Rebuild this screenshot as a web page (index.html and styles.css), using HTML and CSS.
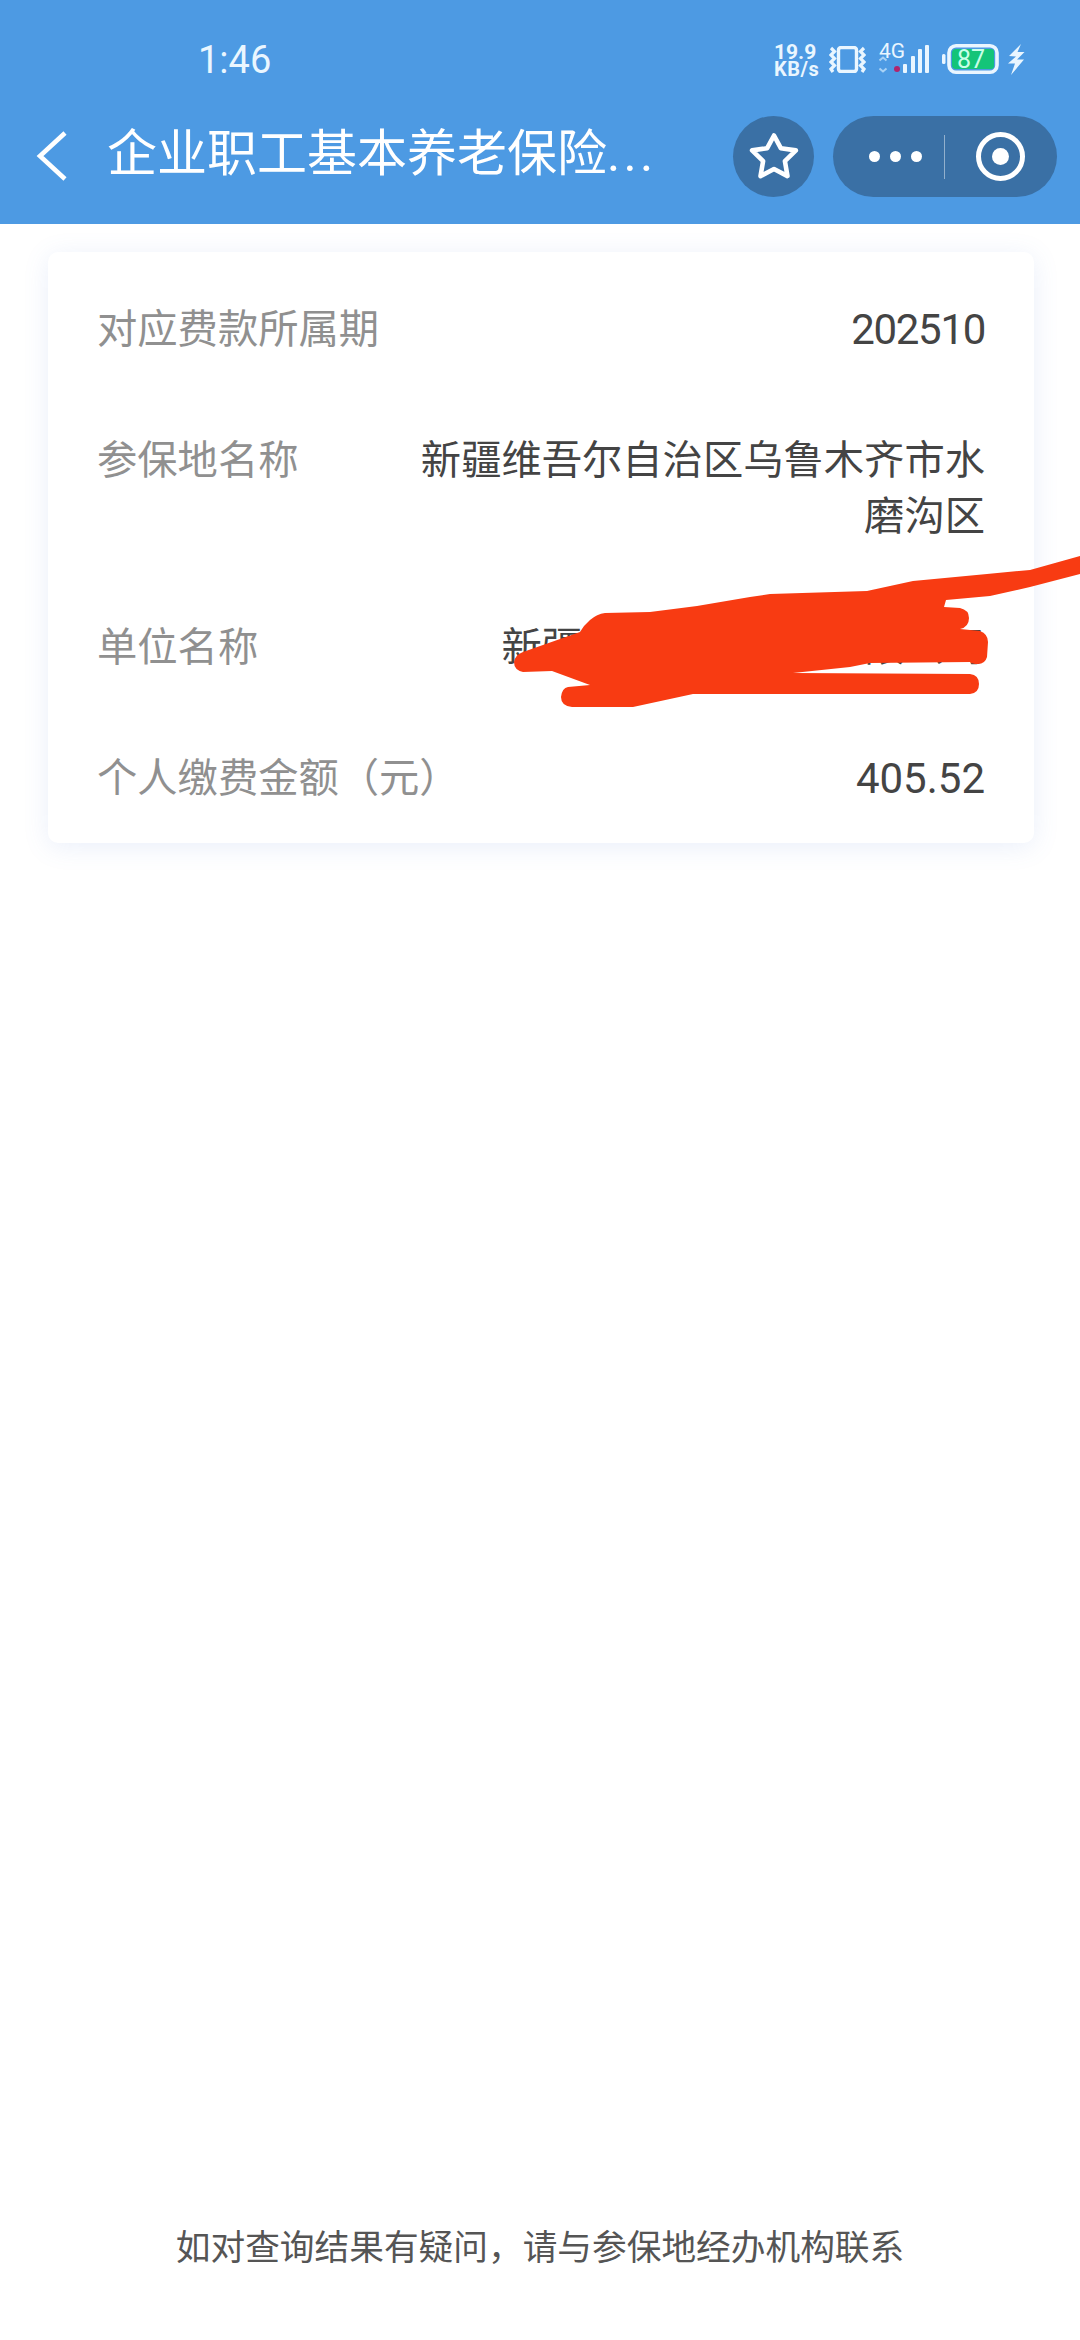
FILE: index.html
```html
<!DOCTYPE html>
<html lang="zh-CN">
<head>
<meta charset="utf-8">
<title>企业职工基本养老保险</title>
<link rel="stylesheet" href="styles.css">
</head>
<body>
<div class="page">
  <header class="header">
    <div class="status">
      <span class="time">1:46</span>
      <div class="status-icons">
        <div class="speed"><span class="speed-num">19.9</span><span class="speed-unit">KB/s</span></div>
        <svg class="ic-vibrate" viewBox="0 0 37 27" width="37" height="27" fill="none" stroke="#eaf6ff" stroke-width="3.2">
          <rect x="9.500" y="1.500" width="18" height="24" rx="2.500" stroke-width="3.400"/>
          <path d="M2 2l3.500 3.500L2 9l3.500 3.500L2 16l3.500 3.500L2 23l2 3"/>
          <path d="M35 2l-3.500 3.500L35 9l-3.500 3.500L35 16l-3.500 3.500L35 23l-2 3"/>
        </svg>
        <svg class="ic-signal" viewBox="0 0 52 37" width="52" height="37">
          <text x="1" y="21" class="net">4G</text>
          <path d="M1.500 24.500L5 21.500l3.500 3M1.500 32.500l3.500 3 3.500-3" transform="translate(0 -1)" fill="none" stroke="#a9d2f5" stroke-width="2"/>
          <circle cx="19" cy="32" r="3" fill="#b0246c"/>
          <rect x="25" y="27" width="4" height="9" rx="1" fill="#eaf6ff"/>
          <rect x="33" y="19" width="4" height="17" rx="1" fill="#eaf6ff"/>
          <rect x="40" y="12" width="4" height="24" rx="1" fill="#eaf6ff"/>
          <rect x="47" y="8" width="4" height="28" rx="1" fill="#eaf6ff"/>
        </svg>
        <svg class="ic-battery" viewBox="0 0 57 30" width="57" height="30">
          <rect x="7" y="1.800" width="48" height="26.400" rx="7" fill="none" stroke="#eaf6ff" stroke-width="3.600"/>
          <path d="M14 5h35a3 3 0 0 1 3 3v14a3 3 0 0 1-3 3H14a4 4 0 0 1-4-4V9a4 4 0 0 1 4-4z" fill="#14c478"/>
          <rect x="0" y="10" width="3.500" height="10" rx="1.500" fill="#eaf6ff"/>
          <text x="15" y="24" class="batt">87</text>
        </svg>
        <svg class="ic-bolt" viewBox="0 0 18 31" width="18" height="31" fill="#eaf6ff">
          <path d="M14 0L2 12 9 12.500 1 19.500 8 19.500 4 31 17 15.500 10 15.500 17.500 8 10.500 8z"/>
        </svg>
      </div>
    </div>
    <nav class="nav">
      <svg class="back" viewBox="0 0 32 50" width="32" height="50" fill="none" stroke="#fff" stroke-width="4.600">
        <path d="M29 2L4 25l25 23"/>
      </svg>
      <h1 class="title">企业职工基本养老保险<span class="ell">...</span></h1>
      <div class="fav">
        <svg viewBox="0 0 50 50" width="50" height="50" fill="none" stroke="#fff" stroke-width="4.600" stroke-linejoin="round">
          <path d="M25 3.500L31.800 16.200 46.900 18.400 35.900 29.100 38.500 44.100 25 37 11.500 44.100 14.100 29.100 3.100 18.400 18.200 16.200z"/>
        </svg>
      </div>
      <div class="capsule">
        <div class="dots"><i></i><i></i><i></i></div>
        <div class="sep"></div>
        <div class="target"><i></i></div>
      </div>
    </nav>
  </header>

  <main class="main">
    <section class="card">
      <div class="row">
        <span class="label">对应费款所属期</span>
        <span class="value num num-tight">202510</span>
      </div>
      <div class="row">
        <span class="label">参保地名称</span>
        <span class="value">新疆维吾尔自治区乌鲁木齐市水磨沟区</span>
      </div>
      <div class="row">
        <span class="label">单位名称</span>
        <span class="value">新疆某某某某某某有限公司</span>
      </div>
      <div class="row">
        <span class="label">个人缴费金额（元）</span>
        <span class="value num">405.52</span>
      </div>
    </section>
  </main>

  <footer class="footer">如对查询结果有疑问，请与参保地经办机构联系</footer>

  <svg class="scribble" viewBox="0 0 1080 2340" width="1080" height="2340">
    <path fill="#f83b12" d="M514 662Q515 655 523 652L580 632Q584 625 590 620 597 614 605 613L650 612 697 606 750 597 770 594 867 591 913 581 987 574 1030 570 1080 556 1080 574 1030 587 990 596 946 600 944 607 960 608Q969 610 969 618 969 627 960 629L980 631Q988 634 988 642L987 657Q985 664 978 664 972 664 970 662L870 663 850 667 793 673 970 674Q979 675 979 684 979 693 970 694L693 694 633 707 572 707Q561 706 561 697 562 688 568 687L590 685 552 671 523 672Q514 670 514 662z"/>
  </svg>
</div>
</body>
</html>
```

FILE: styles.css
```css
* { box-sizing: border-box; }
html, body { margin: 0; padding: 0; background: #fff; }
body { font-family: Roboto, "Noto Sans CJK SC", sans-serif; }

.page {
  position: relative;
  width: 1080px;
  height: 2340px;
  display: flex;
  flex-direction: column;
  overflow: hidden;
}

.header {
  height: 224px;
  background: #4d9ae3;
  flex: none;
}

.status {
  height: 116px;
  display: flex;
  justify-content: space-between;
  align-items: flex-start;
  padding: 43px 55px 0 198px;
}
.time {
  color: #eaf6ff;
  font-size: 38px;
  line-height: 34px;
}
.status-icons {
  display: flex;
  align-items: flex-start;
  height: 34px;
}
.speed {
  display: flex;
  flex-direction: column;
  color: #eaf6ff;
  font-weight: 700;
  width: 48px;
  margin-right: 7px;
}
.speed-num { font-size: 21px; line-height: 18px; }
.speed-unit { font-size: 20px; line-height: 17px; letter-spacing: .5px; white-space: nowrap; }
.ic-vibrate { margin: 3px 12px 0 0; flex: none; }
.ic-signal { margin: -6px 12px 0 0; flex: none; }
.ic-battery { margin: 1px 8px 0 0; flex: none; }
.ic-bolt { margin: 1px 0 0 0; flex: none; }
.net { font: 400 21px Roboto, sans-serif; fill: #eaf6ff; }
.batt { font: 400 25px Roboto, sans-serif; fill: #c8ffe8; }

.nav {
  height: 81px;
  display: flex;
  align-items: center;
  padding-left: 36px;
}
.back { flex: none; margin-top: -2px; }
.title {
  margin: -5px 0 0 39px;
  width: 600px;
  flex: none;
  color: #fff;
  font-size: 50px;
  font-weight: 400;
  line-height: 60px;
  white-space: nowrap;
  font-family: Roboto, "Noto Sans CJK SC", sans-serif;
}
.ell { letter-spacing: 3.300px; }
.fav {
  width: 81px;
  height: 81px;
  margin-left: 26px;
  border-radius: 50%;
  background: #3a70a5;
  display: flex;
  align-items: center;
  justify-content: center;
  flex: none;
}
.capsule {
  width: 224px;
  height: 81px;
  margin-left: 19px;
  border-radius: 41px;
  background: #3a70a5;
  display: flex;
  align-items: center;
  flex: none;
}
.dots {
  width: 111px;
  display: flex;
  justify-content: center;
  gap: 10px;
  padding-left: 13px;
}
.dots i {
  width: 11px;
  height: 11px;
  border-radius: 50%;
  background: #fff;
}
.sep {
  width: 1px;
  height: 44px;
  background: rgba(255, 255, 255, .45);
}
.target {
  width: 49px;
  height: 49px;
  margin-left: 31px;
  border: 5px solid #fff;
  border-radius: 50%;
  display: flex;
  align-items: center;
  justify-content: center;
}
.target i {
  width: 17px;
  height: 17px;
  border-radius: 50%;
  background: #fff;
}

.main {
  flex: 1;
  padding: 28px 46px 0 48px;
}
.card {
  background: #fff;
  border-radius: 10px;
  box-shadow: 0 4px 26px rgba(90, 130, 220, .13);
  padding: 50px 49px 36px;
  display: flex;
  flex-direction: column;
  gap: 75px;
}
.row {
  display: flex;
  justify-content: space-between;
  align-items: flex-start;
  font-size: 40.300px;
  line-height: 56px;
}
.label { color: #909090; white-space: nowrap; flex: none; }
.value {
  color: #444;
  text-align: right;
  width: 570px;
}
.num { font-size: 42px; }
.num-tight { letter-spacing: -1.300px; }

.footer {
  flex: none;
  height: 119px;
  text-align: center;
  color: #555;
  font-size: 34.700px;
  line-height: 48px;
  padding-top: 3px;
}

.scribble {
  position: absolute;
  left: 0;
  top: 0;
  pointer-events: none;
}
```
